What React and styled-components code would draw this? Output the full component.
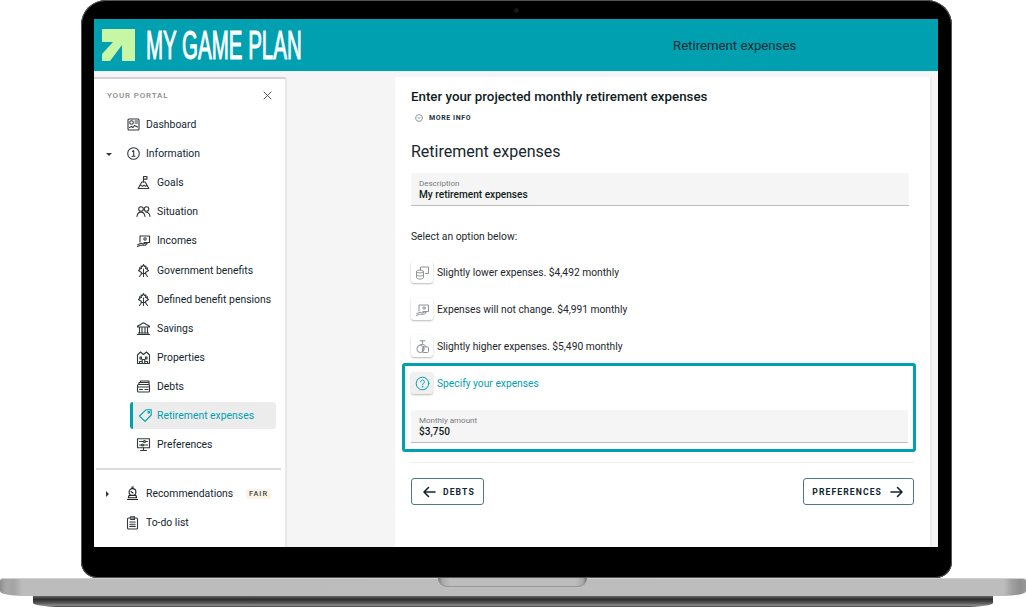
import React from "react";
import styled, { createGlobalStyle } from "styled-components";

const Global = createGlobalStyle`
  html, body { margin: 0; padding: 0; background: #fff; }
  body { font-family: Roboto, "Noto Sans", sans-serif; color: #1c2b33; }
  * { box-sizing: border-box; }
`;

const TEAL = "#00a0b0";
const INK = "#12262f";

const Page = styled.div`
  position: relative;
  width: 1026px;
  height: 608px;
  overflow: hidden;
  background: #fff;
  display: flex;
  flex-direction: column;
  align-items: flex-start;
`;
const Laptop = styled.div`
  position: relative;
  margin-left: 81px;
  width: 871px;
  height: 578px;
  flex: none;
  background: #000;
  border-radius: 25px 25px 0 0 / 25px 25px 0 0;
  border-bottom-left-radius: 16px;
  border-bottom-right-radius: 16px;
  box-shadow: inset 0 0 0 1px #555;
  padding: 19px 14px 31px 13px;
`;
const Camera = styled.span`
  position: absolute;
  top: 8px;
  left: 433px;
  width: 5px;
  height: 5px;
  border-radius: 50%;
  background: #14181c;
`;
const Screen = styled.div`
  width: 100%;
  height: 100%;
  display: flex;
  flex-direction: column;
  background: #f5f5f5;
  overflow: hidden;
`;
const Header = styled.header`
  height: 53px;
  flex: none;
  background: ${TEAL};
  display: flex;
  align-items: center;
  border-bottom: 1px solid #e9f6f7;
`;
const Logo = styled.svg`
  width: 33px;
  height: 33px;
  margin-left: 8px;
  flex: none;
`;
const Brand = styled.div`
  width: 155px;
  margin-left: 11px;
  font-family: "Liberation Sans", Arial, sans-serif;
  font-weight: 400;
  font-size: 41px;
  line-height: 42px;
  color: #fff;
  -webkit-text-stroke: 1.1px #fff;
  white-space: nowrap;
  transform-origin: 0 50%;
  transform: scaleX(0.5);
`;
const HeaderTitle = styled.div`
  margin-left: 372px;
  font-size: 13.2px;
  color: #0d2c33;
  white-space: nowrap;
`;
const Body = styled.div`
  flex: 1;
  display: flex;
  padding-top: 5px;
  min-height: 0;
`;
const Sidebar = styled.nav`
  width: 193px;
  flex: none;
  background: #fff;
  border-top: 2px solid #d3d3d3;
  border-right: 2px solid #e8e8e8;
  border-top-right-radius: 3px;
  display: flex;
  flex-direction: column;
`;
const SideHead = styled.div`
  display: flex;
  align-items: center;
  justify-content: space-between;
  height: 32px;
  padding: 0 13px;
`;
const SideLabel = styled.span`
  font-size: 8px;
  letter-spacing: 0.85px;
  font-weight: 500;
  color: #8a8a86;
`;
const NavList = styled.div`
  display: flex;
  flex-direction: column;
  margin-top: ${(p) => p.$top ?? 0}px;
`;
const Row = styled.div`
  position: relative;
  height: 29.1px;
  display: flex;
  align-items: center;
  padding-left: ${(p) => p.$indent}px;
  font-size: 10.4px;
  color: ${INK};
  white-space: nowrap;
`;
const ActiveRow = styled(Row)`
  height: 27.1px;
  margin: 1px 9px 1px 36px;
  padding-left: 5px;
  background: #ececec;
  border-left: 3px solid ${TEAL};
  border-radius: 3px;
  color: ${TEAL};
`;
const NavIcon = styled.svg`
  width: 15px;
  height: 15px;
  flex: none;
  margin-right: ${(p) => p.$gap ?? 6}px;
  fill: none;
  stroke: ${(p) => p.$color || "#33383b"};
  stroke-width: 1.1;
  stroke-linecap: round;
  stroke-linejoin: round;
`;
const Caret = styled.span`
  position: absolute;
  left: ${(p) => p.$left}px;
  top: 50%;
  width: 0;
  height: 0;
  ${(p) =>
    p.$open
      ? `margin-top:-1px;border-left:3px solid transparent;border-right:3px solid transparent;border-top:3px solid #33383b;`
      : `margin-top:-3px;border-top:3px solid transparent;border-bottom:3px solid transparent;border-left:3px solid #33383b;`}
`;
const Rule = styled.div`
  height: 2px;
  background: #dcdcdc;
  margin: 9px 4px 9px 2px;
`;
const Badge = styled.span`
  position: absolute;
  left: 152px;
  top: 10px;
  background: #fbf3e4;
  border-radius: 2px;
  padding: 0 3px;
  height: 10px;
  line-height: 10px;
  font-size: 7.4px;
  font-weight: 500;
  letter-spacing: 1px;
  color: #3d4a4f;
`;
const Spacer = styled.div`
  width: 108px;
  flex: none;
`;
const Card = styled.main`
  width: 537px;
  flex: none;
  background: #fff;
  border-right: 2px solid #ececec;
  border-top-left-radius: 3px;
  padding: 11px 18px 0 16px;
  display: flex;
  flex-direction: column;
`;
const Lead = styled.h1`
  margin: 0;
  font-size: 13.3px;
  line-height: 18px;
  font-weight: 500;
  color: #0f1c22;
  white-space: nowrap;
`;
const MoreInfo = styled.div`
  display: flex;
  align-items: center;
  height: 14px;
  margin-top: 5px;
  padding-left: 4px;
  font-size: 7px;
  font-weight: 700;
  letter-spacing: 0.6px;
  color: #18323d;
`;
const SmallIcon = styled.svg`
  width: 8px;
  height: 8px;
  margin-right: 6px;
  fill: none;
  stroke: #8a9aa0;
  stroke-width: 1;
`;
const Heading = styled.h2`
  margin: 15px 0 0 0;
  font-size: 16px;
  line-height: 24px;
  font-weight: 400;
  color: #17262d;
`;
const Field = styled.div`
  margin-top: ${(p) => p.$top}px;
  height: 33px;
  margin-right: ${(p) => p.$right ?? 3}px;
  background: #f5f5f5;
  border-bottom: 1px solid #bdbdbd;
  border-radius: 2px 2px 0 0;
  padding: 6px 8px 0;
  display: flex;
  flex-direction: column;
`;
const FieldLabel = styled.span`
  font-size: 8px;
  line-height: 10px;
  color: #777b7d;
`;
const FieldValue = styled.span`
  font-size: 10.1px;
  line-height: 12px;
  font-weight: 500;
  color: #101c22;
`;
const Prompt = styled.p`
  margin: 24px 0 0;
  font-size: 10.3px;
  line-height: 14px;
  color: #20282c;
`;
const Options = styled.div`
  display: flex;
  flex-direction: column;
  gap: 15px;
  margin-top: 17px;
`;
const Option = styled.div`
  display: flex;
  align-items: center;
  height: 22px;
  font-size: 10.25px;
  color: ${(p) => p.$color || "#1c262b"};
  white-space: nowrap;
`;
const OptionIcon = styled.span`
  width: 22px;
  height: 22px;
  margin-right: 4px;
  flex: none;
  display: flex;
  align-items: center;
  justify-content: center;
  background: ${(p) => (p.$selected ? "#f0f0f0" : "#fff")};
  border-radius: 3px;
  box-shadow: 0 1px 2px rgba(0, 0, 0, 0.28);
`;
const OptSvg = styled.svg`
  width: 15px;
  height: 15px;
  fill: none;
  stroke: ${(p) => p.$color || "#8e9396"};
  stroke-width: 1;
  stroke-linecap: round;
  stroke-linejoin: round;
`;
const Selected = styled.section`
  margin: 6px 0 0 -9px;
  width: 514px;
  height: 89px;
  border: 3px solid ${TEAL};
  border-radius: 3px;
  padding: 6px 0 0 6px;
`;
const Divider = styled.div`
  height: 1px;
  background: #efefef;
  margin: 10px 0 0 0;
  width: 503px;
`;
const Actions = styled.div`
  display: flex;
  justify-content: space-between;
  margin-top: 15px;
  width: 503px;
`;
const NavButton = styled.button`
  height: 27px;
  padding: 0 ${(p) => p.$pr}px 0 ${(p) => p.$pl}px;
  background: #fff;
  border: 1.5px solid #4e7a88;
  border-radius: 3px;
  display: flex;
  align-items: center;
  gap: ${(p) => p.$gap}px;
  font-family: inherit;
  font-size: 8.6px;
  font-weight: 700;
  letter-spacing: 1.1px;
  color: #12262f;
`;
const Arrow = styled.svg`
  width: 14px;
  height: 12px;
  fill: none;
  stroke: #12262f;
  stroke-width: 1.6;
  stroke-linecap: round;
  stroke-linejoin: round;
`;
const Base = styled.div`
  position: relative;
  width: 1026px;
  height: 18px;
  flex: none;
  background: linear-gradient(90deg, #8e8e8e 0, #a8a8a8 6px, #a4a4a4 14px, #bcbcbc 22px, #bdbdbd 1004px, #a0a0a0 1012px, #8f8f8f 1020px, #9a9a9a 1026px);
  border-radius: 3px 3px 22px 22px / 3px 3px 5px 5px;
  border-top: 1px solid #d0d0d0;
  z-index: 1;
`;
const Notch = styled.div`
  position: absolute;
  left: 438px;
  top: -1px;
  width: 149px;
  height: 9px;
  background: linear-gradient(90deg, #6e6e6e 0, #a8a8a8 4px, #bdbdbd 12px, #bdbdbd 137px, #a8a8a8 145px, #6e6e6e 149px);
  box-shadow: inset 0 -1px 1px #949494;
  border-radius: 0 0 9px 9px;
`;
const Foot = styled.div`
  width: 1026px;
  height: 12px;
  flex: none;
  display: flex;
  justify-content: center;
`;
const FootBar = styled.div`
  width: 960px;
  height: 11px;
  background: linear-gradient(180deg, #666 0, #2c2c2c 30%, #5a5a5a 65%, #8a8a8a 85%, #3a3a3a 100%);
  border-radius: 0 0 30px 30px / 0 0 4px 4px;
`;

const P = {
  dashboard: <><rect x="2" y="2" width="11" height="11" rx="1" /><circle cx="5.5" cy="5.5" r="1.8" /><path d="M9 4h2.5M9 6h2.5M3.5 10.5l2-1 1.5 1 1.5-2 3 1.5" /></>,
  info: <><circle cx="7.5" cy="7.5" r="5.8" /><path d="M6.5 5.5l1.2-1v5.5M6 10.2h3" /></>,
  goals: <><path d="M7.5 7V1.5h3.5v2.6H7.5" /><path d="M5.8 7h3.4l3.6 6.5H2.2z" /><path d="M4.5 10.3l2 .9 1.5-1 1.5 1 1.5-.7" /></>,
  situation: <><circle cx="5" cy="5" r="2.3" /><circle cx="10.5" cy="5" r="2.3" /><path d="M1 12.5c.3-3 2-4.4 4-4.4s3.6 1.4 4 4.4M10 8.2c2 0 3.6 1.4 4 4.2" /></>,
  incomes: <><path d="M4 9V3h9.5v6.5H8" /><circle cx="9" cy="6" r="1.2" /><path d="M1.5 13.5l3-1.2 5-.2 1.6-1.6-1.6-.4-2.4 1-2-.9-3.5 1.5" /></>,
  benefits: <><path d="M7.5 1.5l1 2 1.5-.5-.5 2.5 2-.7-.5 1.7 1.5 1-3 2 .3 1.2-2.3-.4-2.3.4.3-1.2-3-2 1.5-1-.5-1.7 2 .7L5 3l1.5.5z" /><path d="M7.5 6v7.5M3.5 13.5l1.5-2M11.5 13.5l-1.5-2" /></>,
  savings: <><path d="M1.5 5.2L7.5 1.8l6 3.4v.8h-12zM2.5 12h10M1.5 13.5h12" /><path d="M3.5 6.5V12M6 6.5V12M9 6.5V12M11.5 6.5V12" /></>,
  properties: <><path d="M1.5 13.5V5l3-3 3 2.5L10.5 2l3 3v8.5z" /><path d="M4 7h1.5v2H4zM9.5 7H11v2H9.5zM6.3 13.5V9.5h2.4v4M3.5 13.5v-2h2M9.5 11.5h2v2" /></>,
  debts: <><rect x="1.5" y="5.5" width="12" height="7.5" rx="1" /><path d="M3 5.5V3.5h10v2M4.5 3.5V2h8.5v1.5M1.5 8h12M3.5 10.5h3M9 10.5h3" /></>,
  tag: <><path d="M1.5 8L8 1.8h5.2V7L7 13.4z" /><circle cx="10.8" cy="4.3" r=".8" /></>,
  prefs: <><rect x="1.5" y="1.8" width="12" height="9" /><path d="M7.5 10.8v2.7M4.5 13.5h6M3.5 4.5h4M9.5 4.5h2M3.5 8h2M7.5 8h4" /><circle cx="8.5" cy="4.5" r="1" /><circle cx="6.5" cy="8" r="1" /></>,
  recs: <><circle cx="7.5" cy="6" r="3.4" /><path d="M7 2.5V1h1.5M4 9.5h7l.6 2.2H3.4zM2.5 13.5h10M6 5.5l2 1.5" /></>,
  todo: <><rect x="2.5" y="3" width="10" height="11" rx="1" /><path d="M5.5 3V1.8h4V3M5.5 4.5h4V3M4.8 7h5.4M4.8 9.2h5.4M4.8 11.4h5.4" /></>,
  lower: <><path d="M5.5 5V2h8v6.5h-3" /><ellipse cx="5" cy="6.5" rx="3.5" ry="1.5" /><path d="M1.5 6.5v6c0 .9 1.6 1.5 3.5 1.5s3.5-.6 3.5-1.5v-6M1.5 9.5c0 .9 1.6 1.5 3.5 1.5s3.5-.6 3.5-1.5" /></>,
  higher: <><path d="M5 1.8h5M7.5 1.8v2.5" /><path d="M4 6.5a4.3 4.3 0 0 1 7 1" /><circle cx="5.5" cy="10" r="3.6" /><rect x="7.5" y="8" width="6" height="5.5" rx="1" /></>,
  help: <><circle cx="7.5" cy="7.5" r="6.3" /><path d="M5.7 6c0-1.2.8-1.9 1.9-1.9S9.4 4.8 9.4 5.9c0 1.5-1.9 1.5-1.9 3" /><circle cx="7.5" cy="10.8" r=".3" /></>,
};

const Ico = ({ n, color, gap }) => (
  <NavIcon viewBox="0 0 15 15" $color={color} $gap={gap}>{P[n]}</NavIcon>
);
const Opt = ({ n, color }) => <OptSvg viewBox="0 0 15 15" $color={color}>{P[n]}</OptSvg>;

const children = [
  ["goals", "Goals"],
  ["situation", "Situation"],
  ["incomes", "Incomes"],
  ["benefits", "Government benefits"],
  ["benefits", "Defined benefit pensions"],
  ["savings", "Savings"],
  ["properties", "Properties"],
  ["debts", "Debts"],
];

export default function App() {
  return (
    <Page>
      <Global />
      <Laptop>
        <Camera />
        <Screen>
          <Header>
            <Logo viewBox="0 0 33 33">
              <path fill="#c7f6a4" d="M0 0h33v32H20V16L8 32H0v-7l11-12H0z" />
            </Logo>
            <Brand>MY GAME PLAN</Brand>
            <HeaderTitle>Retirement expenses</HeaderTitle>
          </Header>
          <Body>
            <Sidebar>
              <SideHead>
                <SideLabel>YOUR PORTAL</SideLabel>
                <svg width="9" height="9" viewBox="0 0 9 9" fill="none" stroke="#555" strokeWidth="1"><path d="M.7.7l7.6 7.6M8.3.7L.7 8.3" /></svg>
              </SideHead>
              <NavList $top={-1}>
                <Row $indent={32}><Ico n="dashboard" gap={5} />Dashboard</Row>
                <Row $indent={32}><Caret $left={12} $open /><Ico n="info" gap={5} />Information</Row>
                {children.map(([n, t]) => (
                  <Row key={t} $indent={42}><Ico n={n} />{t}</Row>
                ))}
                <ActiveRow $indent={5}><Ico n="tag" color={TEAL} gap={4} />Retirement expenses</ActiveRow>
                <Row $indent={42}><Ico n="prefs" />Preferences</Row>
              </NavList>
              <Rule />
              <NavList>
                <Row $indent={31}><Caret $left={12} /><Ico n="recs" color="#1c2226" />Recommendations<Badge>FAIR</Badge></Row>
                <Row $indent={31}><Ico n="todo" />To-do list</Row>
              </NavList>
            </Sidebar>
            <Spacer />
            <Card>
              <Lead>Enter your projected monthly retirement expenses</Lead>
              <MoreInfo>
                <SmallIcon viewBox="0 0 8 8"><circle cx="4" cy="4" r="3.4" /><path d="M2.5 4h3" /></SmallIcon>
                MORE INFO
              </MoreInfo>
              <Heading>Retirement expenses</Heading>
              <Field $top={9}>
                <FieldLabel>Description</FieldLabel>
                <FieldValue>My retirement expenses</FieldValue>
              </Field>
              <Prompt>Select an option below:</Prompt>
              <Options>
                <Option><OptionIcon><Opt n="lower" /></OptionIcon>Slightly lower expenses. $4,492 monthly</Option>
                <Option><OptionIcon><Opt n="incomes" /></OptionIcon>Expenses will not change. $4,991 monthly</Option>
                <Option><OptionIcon><Opt n="higher" /></OptionIcon>Slightly higher expenses. $5,490 monthly</Option>
              </Options>
              <Selected>
                <Option $color={TEAL}><OptionIcon $selected><Opt n="help" color={TEAL} /></OptionIcon>Specify your expenses</Option>
                <Field $top={16} $right={5}>
                  <FieldLabel>Monthly amount</FieldLabel>
                  <FieldValue>$3,750</FieldValue>
                </Field>
              </Selected>
              <Divider />
              <Actions>
                <NavButton $pl={10} $pr={8} $gap={7}>
                  <Arrow viewBox="0 0 14 12"><path d="M13 6H2M6.5 1.5L2 6l4.5 4.5" /></Arrow>
                  DEBTS
                </NavButton>
                <NavButton $pl={8} $pr={9} $gap={8}>
                  PREFERENCES
                  <Arrow viewBox="0 0 14 12"><path d="M1 6h11M7.5 1.5L12 6l-4.5 4.5" /></Arrow>
                </NavButton>
              </Actions>
            </Card>
          </Body>
        </Screen>
      </Laptop>
      <Base><Notch /></Base>
      <Foot><FootBar /></Foot>
    </Page>
  );
}
